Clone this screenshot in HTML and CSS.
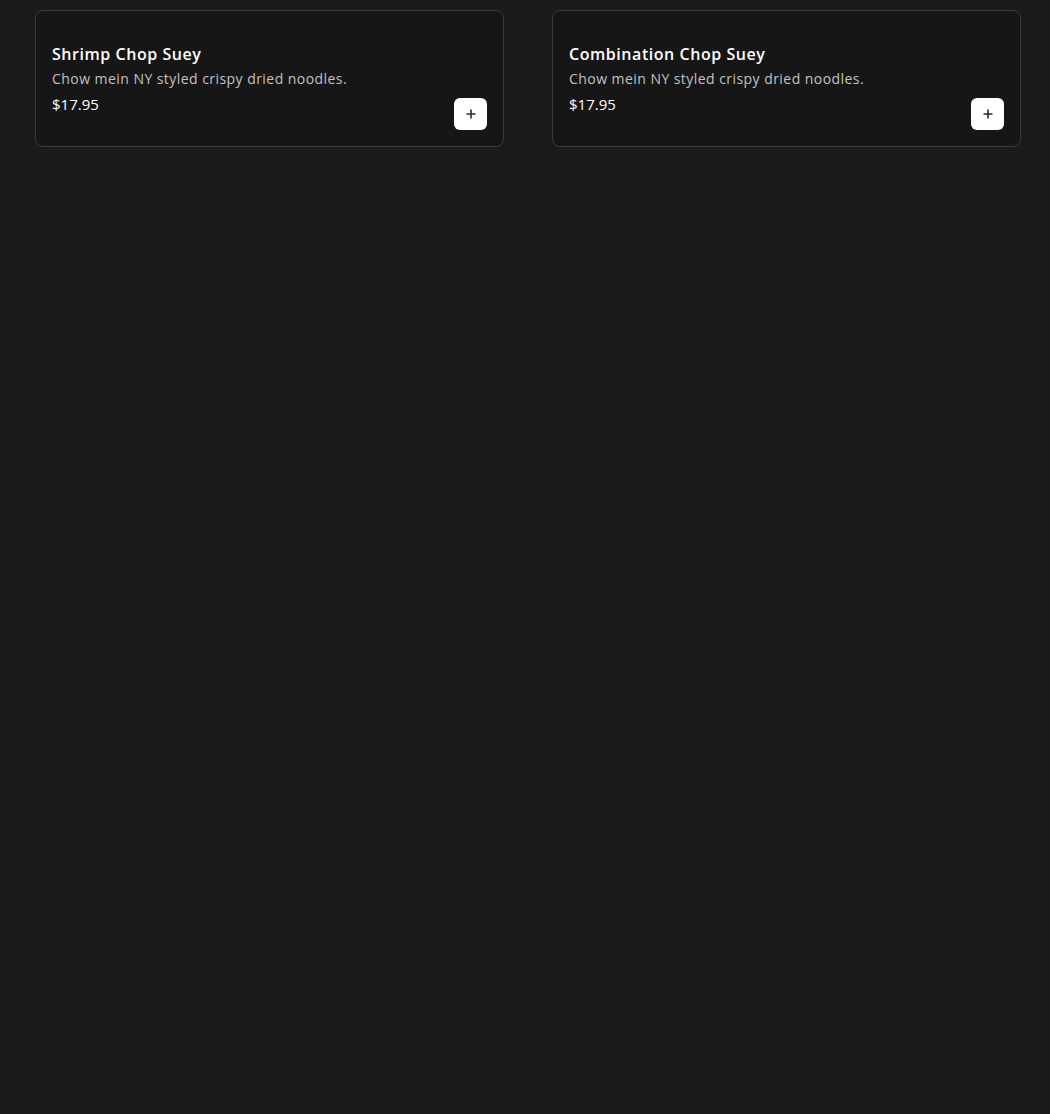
FILE: index.html
```html
<!DOCTYPE html>
<html>
<head>
<meta charset="utf-8">
<link rel="stylesheet" href="styles.css">
</head>
<body>
<main class="grid">
  <article class="card">
    <div class="info">
      <h3 class="title">Shrimp Chop Suey</h3>
      <p class="desc">Chow mein NY styled crispy dried noodles.</p>
      <p class="price">$17.95</p>
    </div>
    <button class="add" aria-label="Add">
      <svg width="12" height="12" viewBox="0 0 12 12"><path d="M6 1.5v9M1.5 6h9" stroke="#2a2a2a" stroke-width="1.6" fill="none"/></svg>
    </button>
  </article>
  <article class="card">
    <div class="info">
      <h3 class="title">Combination Chop Suey</h3>
      <p class="desc">Chow mein NY styled crispy dried noodles.</p>
      <p class="price">$17.95</p>
    </div>
    <button class="add" aria-label="Add">
      <svg width="12" height="12" viewBox="0 0 12 12"><path d="M6 1.5v9M1.5 6h9" stroke="#2a2a2a" stroke-width="1.6" fill="none"/></svg>
    </button>
  </article>
</main>
</body>
</html>
```
FILE: styles.css
```css
html, body {
  margin: 0;
  padding: 0;
  background: #1b1b1b;
  height: 100%;
}
body {
  font-family: "Open Sans", "DejaVu Sans", sans-serif;
  color: #fff;
}
.grid {
  display: grid;
  grid-template-columns: 469px 469px;
  column-gap: 48px;
  padding: 10px 29px 0 35px;
}
.card {
  box-sizing: border-box;
  height: 137px;
  background: #161616;
  border: 1px solid #3b3b3b;
  border-radius: 8px;
  padding: 31px 16px 0 16px;
  display: flex;
  justify-content: space-between;
  align-items: flex-start;
}
.info {
  display: flex;
  flex-direction: column;
}
.title {
  margin: 0;
  font-size: 16px;
  line-height: 24px;
  font-weight: 600;
  letter-spacing: 0.55px;
}
.desc {
  margin: 2px 0 0 0;
  font-size: 14px;
  line-height: 22px;
  color: #c2c2c2;
  letter-spacing: 0.45px;
}
.price {
  margin: 3px 0 0 0;
  font-size: 15px;
  line-height: 22px;
  color: #fff;
}
.add {
  margin-top: 56px;
  width: 33px;
  height: 32px;
  border: none;
  border-radius: 6px;
  background: #fff;
  display: flex;
  align-items: center;
  justify-content: center;
  padding: 0;
}
```
